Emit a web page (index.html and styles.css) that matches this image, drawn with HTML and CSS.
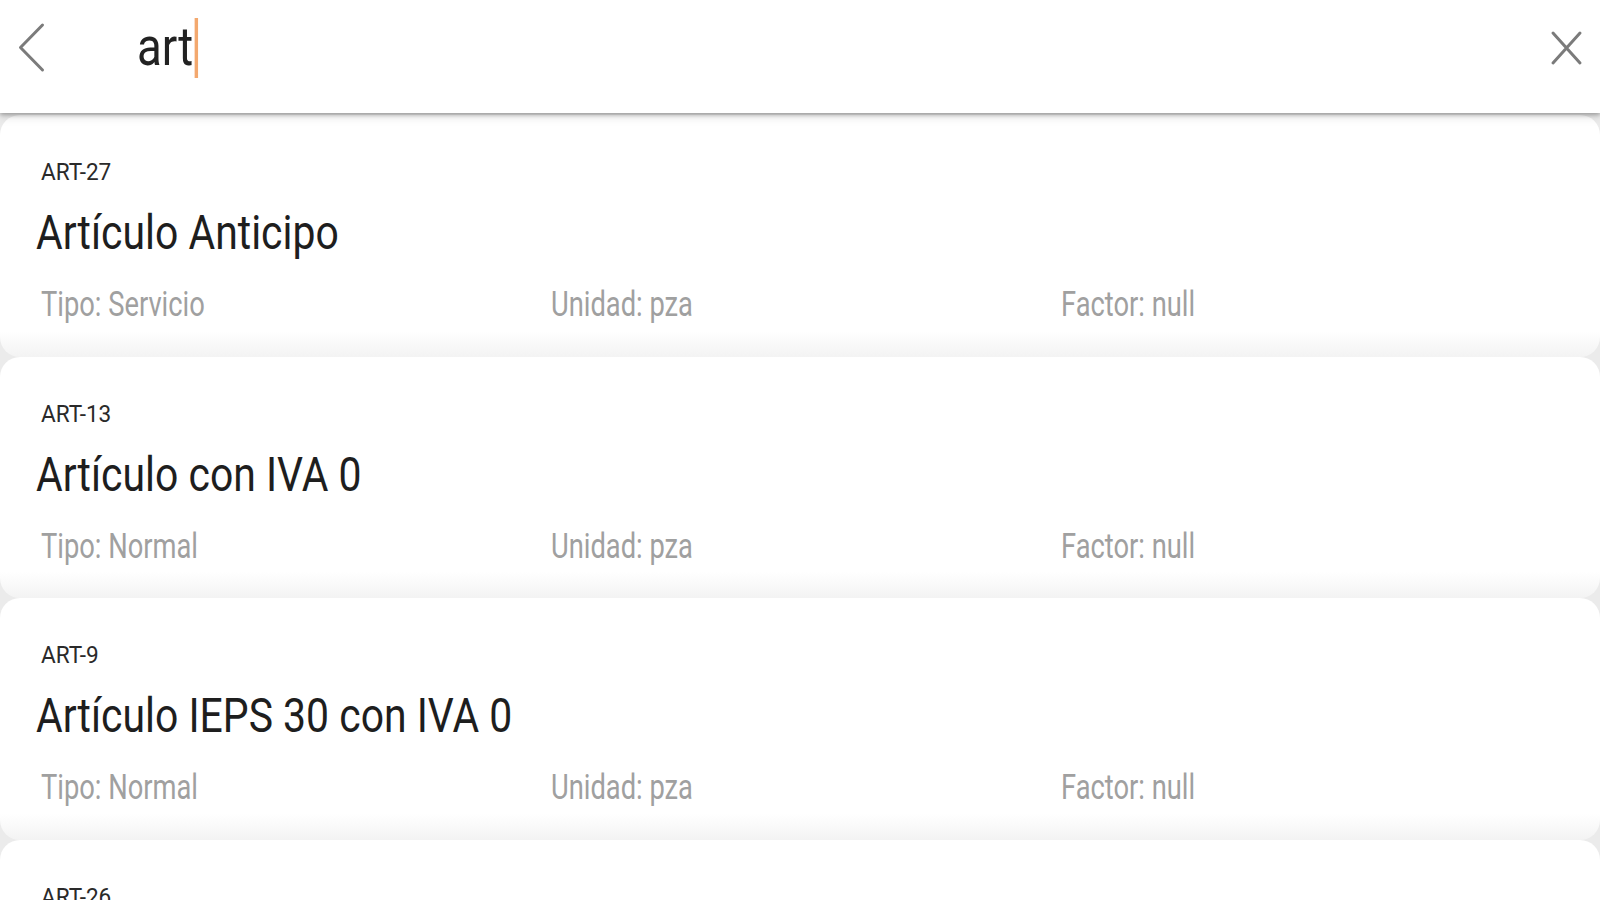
FILE: index.html
```html
<!DOCTYPE html>
<html lang="es">
<head>
<meta charset="utf-8">
<title>Buscar artículos</title>
<link rel="stylesheet" href="styles.css">
</head>
<body>
<header class="search-bar">
  <button class="icon-btn back" aria-label="Regresar">
    <svg width="60" height="60" viewBox="0 0 60 60"><polyline points="42.5,8 20.5,30.5 42.5,53" fill="none" stroke="#7b7b7b" stroke-width="3" stroke-linecap="round" stroke-linejoin="round"/></svg>
  </button>
  <div class="query"><span class="squeeze"><span class="query-text">art</span><span class="caret"></span></span></div>
  <button class="icon-btn close" aria-label="Limpiar">
    <svg width="40" height="40" viewBox="0 0 40 40"><path d="M7 5 L34 35 M34 5 L7 35" fill="none" stroke="#7b7b7b" stroke-width="3" stroke-linecap="round"/></svg>
  </button>
</header>
<main class="results">
  <article class="card">
    <div class="code"><span class="squeeze code-s">ART-27</span></div>
    <h2 class="name"><span class="squeeze name-s">Artículo Anticipo</span></h2>
    <div class="meta">
      <span class="squeeze meta-s">Tipo: Servicio</span>
      <span class="squeeze meta-s">Unidad: pza</span>
      <span class="squeeze meta-s">Factor: null</span>
    </div>
  </article>
  <article class="card">
    <div class="code"><span class="squeeze code-s">ART-13</span></div>
    <h2 class="name"><span class="squeeze name-s">Artículo con IVA 0</span></h2>
    <div class="meta">
      <span class="squeeze meta-s">Tipo: Normal</span>
      <span class="squeeze meta-s">Unidad: pza</span>
      <span class="squeeze meta-s">Factor: null</span>
    </div>
  </article>
  <article class="card">
    <div class="code"><span class="squeeze code-s">ART-9</span></div>
    <h2 class="name"><span class="squeeze name-s">Artículo IEPS 30 con IVA 0</span></h2>
    <div class="meta">
      <span class="squeeze meta-s">Tipo: Normal</span>
      <span class="squeeze meta-s">Unidad: pza</span>
      <span class="squeeze meta-s">Factor: null</span>
    </div>
  </article>
  <article class="card">
    <div class="code"><span class="squeeze code-s">ART-26</span></div>
  </article>
</main>
</body>
</html>
```
FILE: styles.css
```css
* { box-sizing: border-box; }
html, body {
  margin: 0;
  padding: 0;
  width: 1600px;
  height: 900px;
  overflow: hidden;
  background: #ebebeb;
  font-family: Roboto, "Noto Sans", sans-serif;
}
.squeeze {
  display: inline-block;
  white-space: nowrap;
  transform: scaleX(0.86);
  transform-origin: 0 50%;
}
.code-s { transform: scaleX(0.94); }
.name-s { transform: scaleX(0.835); }
.meta-s { transform: scaleX(0.78); }
.search-bar {
  position: relative;
  z-index: 2;
  height: 113px;
  background: #ffffff;
  display: flex;
  align-items: flex-start;
  box-shadow: 0 2px 4px rgba(0,0,0,0.28), 0 4px 10px rgba(0,0,0,0.10);
}
.icon-btn {
  border: 0;
  background: none;
  padding: 0;
  margin: 0;
  display: block;
}
.icon-btn svg { display: block; }
.back { margin-top: 17px; }
.close { margin-top: 28px; margin-right: 14px; }
.query {
  flex: 1;
  padding-top: 16px;
  padding-left: 77px;
}
.query-text {
  font-size: 53px;
  line-height: 62px;
  color: #222222;
  vertical-align: top;
}
.caret {
  display: inline-block;
  width: 3.5px;
  height: 60px;
  margin-top: 2px;
  margin-left: 2px;
  background: #f3a86e;
  vertical-align: top;
}
.results {
  padding-top: 2px;
}
.card {
  height: 241.6px;
  border-radius: 20px;
  background: linear-gradient(to bottom, #ffffff calc(100% - 26px), #f3f3f3 100%);
  padding: 43px 29px 0 41px;
}
.code {
  font-size: 24px;
  line-height: 28px;
  color: #2a2a2a;
}
.name {
  margin: 18px 0 0 -5px;
  font-size: 49px;
  line-height: 58px;
  font-weight: 400;
  color: #1e1e1e;
}
.meta {
  margin-top: 22px;
  display: grid;
  grid-template-columns: 510px 510px 1fr;
  font-size: 35px;
  line-height: 41px;
  color: #a0a0a0;
}
```
